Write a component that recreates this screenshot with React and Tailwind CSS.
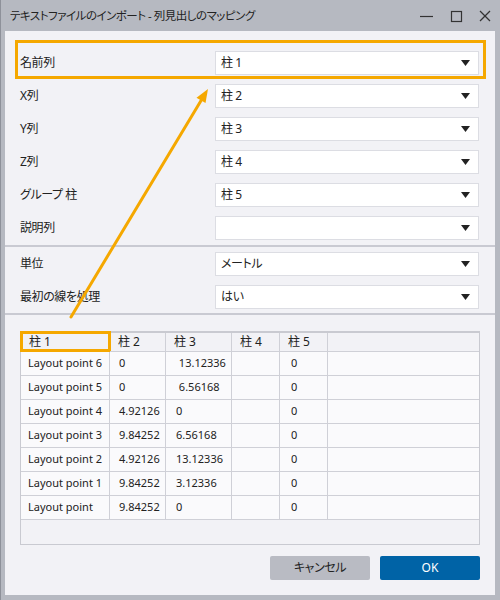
import React from 'react';

const font = "font-['Noto_Sans','Noto_Sans_CJK_JP',sans-serif] [font-feature-settings:'palt']";

const mapRows = [
  ['名前列', '柱 1'],
  ['X列', '柱 2'],
  ['Y列', '柱 3'],
  ['Z列', '柱 4'],
  ['グループ 柱', '柱 5'],
  ['説明列', ''],
];

const optionRows = [
  ['単位', 'メートル'],
  ['最初の線を処理', 'はい'],
];

const headers = ['柱 1', '柱 2', '柱 3', '柱 4', '柱 5', ''];

const data = [
  ['Layout point 6', '0', ' 13.12336', '', '0'],
  ['Layout point 5', '0', ' 6.56168', '', '0'],
  ['Layout point 4', '4.92126', '0', '', '0'],
  ['Layout point 3', '9.84252', '6.56168', '', '0'],
  ['Layout point 2', '4.92126', '13.12336', '', '0'],
  ['Layout point 1', '9.84252', '3.12336', '', '0'],
  ['Layout point', '9.84252', '0', '', '0'],
];

const Caret = () => (
  <svg width="9" height="6" viewBox="0 0 9 6">
    <polygon points="0,0 9,0 4.5,6" fill="#222" />
  </svg>
);

const Dropdown = ({ value }) => (
  <div className="w-[264px] h-[24px] bg-white border border-[#dcdde3] flex items-center justify-between pl-[5px] pr-[8px]">
    <span className="text-[12px] text-[#222] tracking-[-0.4px]">{value}</span>
    <Caret />
  </div>
);

const Row = ({ label, value }) => (
  <div className="flex items-center h-[33px] pl-[15px]">
    <div className="w-[195px] text-[12px] text-[#222] tracking-[-0.4px]">{label}</div>
    <Dropdown value={value} />
  </div>
);

const cols = 'grid grid-cols-[89px_56px_66px_48px_48px_1fr]';

export default function App() {
  return (
    <div className={`w-[500px] h-[600px] bg-[#b6b9c1] border-l border-[#8e919a] flex flex-col ${font}`}>
      {/* title bar */}
      <div className="h-[31px] flex items-center pl-[9px] pr-[8px] text-[#222]">
        <span className="text-[11.5px] tracking-[-0.5px] flex-1">テキストファイルのインポート - 列見出しのマッピング</span>
        <svg width="80" height="14" viewBox="0 0 80 14">
          <line x1="8" y1="7.5" x2="21" y2="7.5" stroke="#333" strokeWidth="1.2" />
          <rect x="39.5" y="2.5" width="10" height="10" fill="none" stroke="#333" strokeWidth="1.2" />
          <line x1="68" y1="2" x2="78" y2="12" stroke="#333" strokeWidth="1.2" />
          <line x1="78" y1="2" x2="68" y2="12" stroke="#333" strokeWidth="1.2" />
        </svg>
      </div>

      {/* dialog body */}
      <div className="relative mr-[5px] ml-[4px] mb-[5px] flex-1 bg-[#f2f2f6] flex flex-col">
        <div className="pt-[15px] pb-[1px]">
          {mapRows.map(([l, v]) => (
            <Row key={l} label={l} value={v} />
          ))}
        </div>
        <div className="h-[2px] bg-[#c9cad2]" />
        <div>
          {optionRows.map(([l, v]) => (
            <Row key={l} label={l} value={v} />
          ))}
        </div>
        <div className="h-[2px] bg-[#c9cad2]" />

        {/* preview table */}
        <div className="mx-[15px] mt-[16px] h-[214px] border border-t-2 border-[#c9cad1] flex flex-col text-[11px] text-[#222]">
          <div className={`${cols} h-[19px] bg-[#f2f2f6] text-[12px]`}>
            {headers.map((h, i) => (
              <div
                key={i}
                className={`relative flex items-center pl-[8px] border-b border-[#cfd0d7] ${i < 5 ? 'border-r' : ''}`}
              >
                {h}
                {i === 0 && (
                  <div className="absolute left-[-1px] top-[-2px] w-[91px] h-[21px] border-[3px] border-[#f5a800]" />
                )}
              </div>
            ))}
          </div>
          {data.map((r, ri) => (
            <div key={ri} className={`${cols} h-[24px] bg-[#fafafc]`}>
              {r.map((c, ci) => (
                <div
                  key={ci}
                  className={`flex items-center border-b border-r border-[#cfd0d7] whitespace-pre ${ci === 0 ? 'pl-[7px]' : ci === 2 ? 'pl-[10px]' : ci === 4 ? 'pl-[11px]' : 'pl-[9px]'}`}
                >
                  {c}
                </div>
              ))}
              <div className="border-b border-[#cfd0d7]" />
            </div>
          ))}
          <div className="flex-1 bg-[#f2f2f6]" />
        </div>

        {/* buttons */}
        <div className="flex justify-end gap-[10px] mt-[11px] mr-[15px]">
          <button className="w-[100px] h-[24px] bg-[#b9bbc3] rounded-[2px] text-[12px] text-[#222] tracking-[-0.4px]">キャンセル</button>
          <button className="w-[100px] h-[24px] bg-[#0063a6] rounded-[2px] text-[12px] text-white">OK</button>
        </div>

        {/* annotation overlay */}
        <div className="absolute left-[10px] top-[9px] w-[471px] h-[39px] border-[3px] border-[#f5a800] pointer-events-none" />
        <svg className="absolute left-0 top-0 pointer-events-none" width="490" height="300" viewBox="0 0 490 300">
          <line x1="66" y1="286" x2="197" y2="68" stroke="#f5a800" strokeWidth="3" strokeLinecap="round" />
          <polygon points="203,58 191.5,66.7 200.5,72" fill="#f5a800" />
        </svg>
      </div>
    </div>
  );
}
